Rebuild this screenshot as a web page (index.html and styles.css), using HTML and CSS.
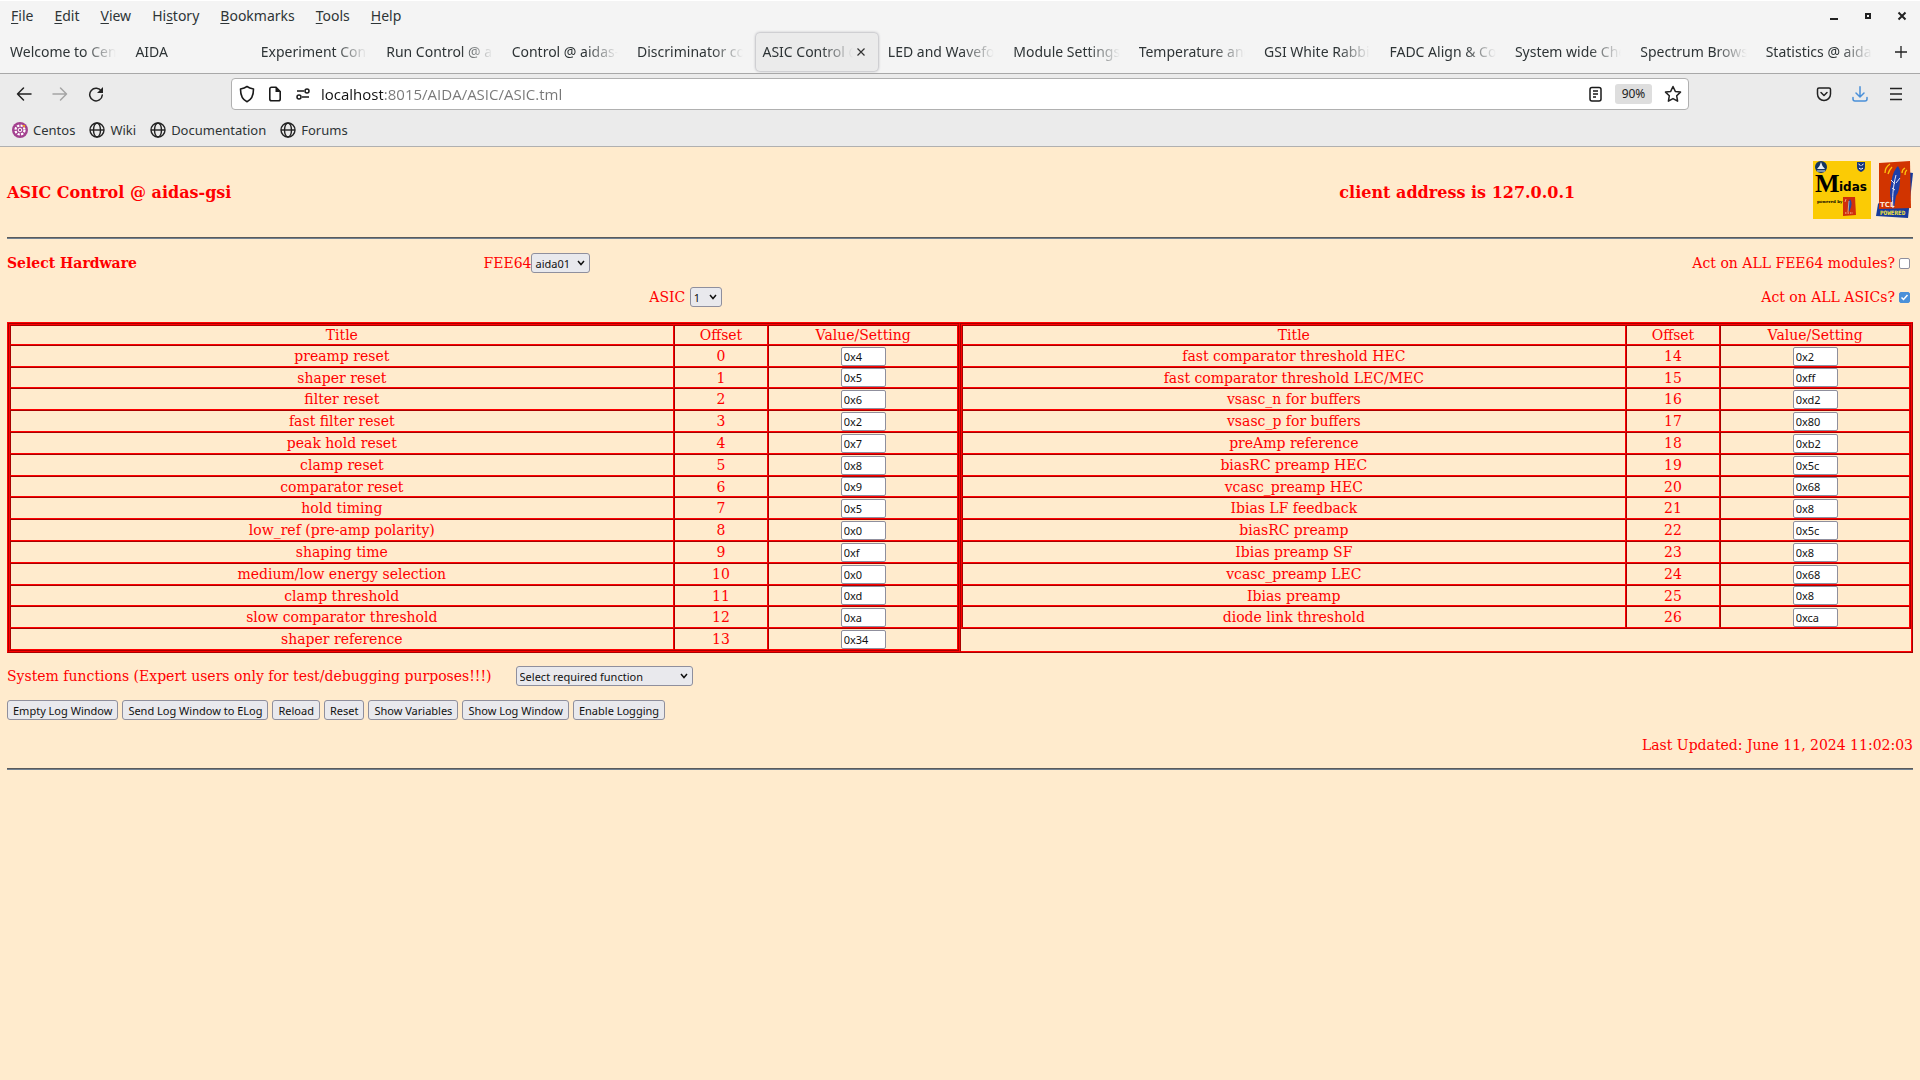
FILE: index.html
```html
<!DOCTYPE html>
<html lang="en">
<head>
<meta charset="utf-8">
<title>ASIC Control @ aidas-gsi</title>
<link rel="stylesheet" href="styles.css">
</head>
<body>
<header class="browser">
  <div class="menubar">
    <nav class="menus">
      <button class="menu"><u>F</u>ile</button>
      <button class="menu"><u>E</u>dit</button>
      <button class="menu"><u>V</u>iew</button>
      <button class="menu">Hi<u>s</u>tory</button>
      <button class="menu"><u>B</u>ookmarks</button>
      <button class="menu"><u>T</u>ools</button>
      <button class="menu"><u>H</u>elp</button>
    </nav>
    <div class="window-buttons">
      <button class="icon-button" aria-label="Minimize"><svg width="16" height="16"><path d="M4 10h8v2H4z" fill="#222"/></svg></button>
      <button class="icon-button" aria-label="Maximize"><svg width="16" height="16"><path d="M6 6h4v4H6z" fill="none" stroke="#222" stroke-width="2"/></svg></button>
      <button class="icon-button" aria-label="Close window"><svg width="16" height="16"><path d="M4.500 4.500l7 7M11.500 4.500l-7 7" stroke="#222" stroke-width="2"/></svg></button>
    </div>
  </div>

  <div class="tabbar">
    <div class="tabs" role="tablist">
      <button class="tab" role="tab"><span class="tab-title">Welcome to Cent</span></button>
      <button class="tab" role="tab"><span class="tab-title">AIDA</span></button>
      <button class="tab" role="tab"><span class="tab-title">Experiment Cont</span></button>
      <button class="tab" role="tab"><span class="tab-title">Run Control @ ai</span></button>
      <button class="tab" role="tab"><span class="tab-title">Control @ aidas-</span></button>
      <button class="tab" role="tab"><span class="tab-title">Discriminator con</span></button>
      <button class="tab active" role="tab" aria-selected="true"><span class="tab-title">ASIC Control @</span><svg class="tab-close" width="16" height="16"><path d="M4.500 4.500l7 7M11.500 4.500l-7 7" stroke="#333" stroke-width="1.200"/></svg></button>
      <button class="tab" role="tab"><span class="tab-title">LED and Wavefo</span></button>
      <button class="tab" role="tab"><span class="tab-title">Module Settings</span></button>
      <button class="tab" role="tab"><span class="tab-title">Temperature and</span></button>
      <button class="tab" role="tab"><span class="tab-title">GSI White Rabbit</span></button>
      <button class="tab" role="tab"><span class="tab-title">FADC Align &amp; Co</span></button>
      <button class="tab" role="tab"><span class="tab-title">System wide Che</span></button>
      <button class="tab" role="tab"><span class="tab-title">Spectrum Brows</span></button>
      <button class="tab" role="tab"><span class="tab-title">Statistics @ aidas</span></button>
    </div>
    <button class="icon-button new-tab" aria-label="New tab"><svg width="16" height="16"><path d="M8 2v12M2 8h12" stroke="#222" stroke-width="1.300"/></svg></button>
  </div>

  <div class="toolbar">
    <div class="nav-buttons">
      <button class="icon-button" aria-label="Back"><svg width="16" height="16" fill="none" stroke="#222" stroke-width="1.500" stroke-linecap="round" stroke-linejoin="round"><path d="M15 8H1.500M7.500 2l-6 6 6 6"/></svg></button>
      <button class="icon-button" aria-label="Forward"><svg width="16" height="16" fill="none" stroke="#a5a5a5" stroke-width="1.500" stroke-linecap="round" stroke-linejoin="round"><path d="M1 8h13.500M8.500 2l6 6-6 6"/></svg></button>
      <button class="icon-button" aria-label="Reload"><svg width="16" height="16"><path d="M13.500 5.500A6.300 6.300 0 1 0 14.300 9" fill="none" stroke="#222" stroke-width="1.500" stroke-linecap="round"/><path d="M15 1v6H9z" fill="#222"/></svg></button>
    </div>
    <div class="urlbar">
      <svg width="16" height="18" fill="none" stroke="#1a1a1a" stroke-width="1.600" stroke-linejoin="round"><path d="M8 1.500c2 1.400 4 2 6.500 2.500 0 6-1.500 10.500-6.500 12.700C3 14.500 1.500 10 1.500 4 4 3.500 6 2.900 8 1.500z"/></svg>
      <svg width="16" height="16"><path d="M2.800 3a1.800 1.800 0 0 1 1.800-1.800H9l4.200 4.300V13a1.800 1.800 0 0 1-1.800 1.800H4.600A1.800 1.800 0 0 1 2.800 13z" fill="none" stroke="#1a1a1a" stroke-width="1.600"/><path d="M8.500 1v5H13.500z" fill="#1a1a1a"/></svg>
      <svg width="16" height="16" fill="none" stroke="#1a1a1a" stroke-width="1.500"><path d="M2 5h7M7 11h7"/><circle cx="12" cy="5" r="2"/><circle cx="4" cy="11" r="2"/></svg>
      <input class="url" aria-label="Address" value="localhost:8015/AIDA/ASIC/ASIC.tml">
      <svg width="16" height="16" fill="none" stroke="#1a1a1a" stroke-width="1.500"><rect x="3" y="1.500" width="11" height="13.500" rx="2"/><path d="M6 5h5M6 8h5M6 11h3"/></svg>
      <button class="zoom-level">90%</button>
      <svg width="18" height="18" fill="none" stroke="#222" stroke-width="1.500" stroke-linejoin="round"><path d="M9 1.500l2.300 4.900 5.200.7-3.800 3.700.9 5.400L9 13.600l-4.600 2.600.9-5.400L1.500 7.100l5.200-.7z"/></svg>
    </div>
    <div class="tool-buttons">
      <button class="icon-button" aria-label="Save to Pocket"><svg width="16" height="16" fill="none" stroke="#222" stroke-width="1.500" stroke-linecap="round" stroke-linejoin="round"><path d="M1.500 3.500a1.500 1.500 0 0 1 1.500-1.500h10a1.500 1.500 0 0 1 1.500 1.500V8a6.500 6.500 0 0 1-13 0zM5 6.500l3 3 3-3"/></svg></button>
      <button class="icon-button" aria-label="Downloads"><svg width="16" height="16" fill="none" stroke="#4a90d9" stroke-width="1.500" stroke-linecap="round" stroke-linejoin="round"><path d="M8 .8v9.700M4 7l4 4 4-4M1 11.500v1.500a2 2 0 0 0 2 2h10a2 2 0 0 0 2-2v-1.500"/></svg></button>
      <button class="icon-button" aria-label="Menu"><svg width="16" height="16"><path d="M2 2.500h12M2 8h12M2 13.500h12" stroke="#222" stroke-width="1.500"/></svg></button>
    </div>
  </div>

  <nav class="bookmarks">
    <a class="bookmark" href="#"><svg width="16" height="16"><circle cx="8" cy="8" r="8" fill="#a3418f"/><circle cx="8" cy="8" r="4.500" fill="none" stroke="#fff" stroke-width="2.200" stroke-dasharray="2.300 1.234"/><circle cx="8" cy="8" r="1.800" fill="none" stroke="#fff" stroke-width="1"/><path d="M10 3h3v3z" fill="#f29b1d"/></svg>Centos</a>
    <a class="bookmark" href="#"><svg width="16" height="16" fill="none" stroke="#222" stroke-width="1.400"><circle cx="8" cy="8" r="7"/><ellipse cx="8" cy="8" rx="3.500" ry="7"/><path d="M1 8h14"/></svg>Wiki</a>
    <a class="bookmark" href="#"><svg width="16" height="16" fill="none" stroke="#222" stroke-width="1.400"><circle cx="8" cy="8" r="7"/><ellipse cx="8" cy="8" rx="3.500" ry="7"/><path d="M1 8h14"/></svg>Documentation</a>
    <a class="bookmark" href="#"><svg width="16" height="16" fill="none" stroke="#222" stroke-width="1.400"><circle cx="8" cy="8" r="7"/><ellipse cx="8" cy="8" rx="3.500" ry="7"/><path d="M1 8h14"/></svg>Forums</a>
  </nav>
</header>

<main class="page">
  <div class="banner">
    <h1 class="heading">ASIC Control @ aidas-gsi</h1>
    <h2 class="heading client">client address is 127.0.0.1</h2>
    <div class="logos">
      <svg width="58" height="58" viewBox="0 0 58 58" role="img" aria-label="Midas">
        <rect width="58" height="58" fill="#fbcb05"/>
        <circle cx="8" cy="6" r="6" fill="#123462"/><path d="M8 1l1.500 4L12 8H4l2.500-3z" fill="#e8eef5"/><path d="M4 10h8" stroke="#e8eef5"/>
        <path d="M44 1h8v5c0 3-2 4-4 5-2-1-4-2-4-5z" fill="#16367d"/><path d="M45.500 3l2 1.500M50.500 3l-2 1.500M46 7c1.500 1.500 2.500 1.500 4 0" stroke="#fff" fill="none"/>
        <text x="2" y="31" class="midas-m">M</text>
        <text x="26" y="30" class="midas-rest">idas</text>
        <text x="4" y="42" class="midas-small">powered by</text>
        <path d="M30 36h12l1 18-13 1z" fill="#cf2e0c"/><path d="M37 38c3 4 1 9-1 13-1-5-2-9 1-13z" fill="#2747a5"/><path d="M36 40l-1 11M33 38l-1 3" stroke="#f3d9a0" stroke-width=".7"/><path d="M32 52h8" stroke="#f6c8a0" stroke-dasharray="1.500 1"/>
      </svg>
      <svg width="37" height="58" viewBox="0 0 37 58" role="img" aria-label="Tcl Powered">
        <path d="M30 11l7 1-5 45-32-2 2-12z" fill="#173b9c"/>
        <path d="M3 2l31-2 1 47-32 1z" fill="#d13400"/>
        <path d="M18 47c-4-8-5-16-3-24 1-8 3-14 7-18 2 3 3 7 2 12 0 8-1 14-4 18z" fill="#1e3fa8"/>
        <path d="M17 47c-1-9 0-22 3-33M16 27l3 2M15 19l4 4M24 17l-4 5" fill="none" stroke="#e8e6f5" stroke-width="1"/>
        <path d="M9 12c0-4 2-7 5-9M12 13c1-3 2-5 4-7M26 12c0-2 1-4 3-5M29 14c0-2 0-4 2-5" fill="none" stroke="#ffc20d" stroke-width="1.300"/>
        <text x="4" y="46" class="tcl">TCL</text>
        <text x="4" y="54" class="tcl-powered">POWERED</text>
      </svg>
    </div>
  </div>
  <hr class="rule">

  <div class="hardware modules">
    <h2 class="subheading">Select Hardware</h2>
    <div class="choice"><label for="fee">FEE64</label><select id="fee" class="select"><option>aida01</option></select></div>
    <div class="check"><label for="all-fee">Act on ALL FEE64 modules?</label><input type="checkbox" id="all-fee" class="tick"></div>
  </div>
  <div class="hardware asics">
    <div class="choice"><label for="asic">ASIC&nbsp;</label><select id="asic" class="select"><option>1</option></select></div>
    <div class="check"><label for="all-asic">Act on ALL ASICs?</label><input type="checkbox" id="all-asic" class="tick" checked></div>
  </div>

  <div class="registers">
    <div class="half"><table class="grid"><thead><tr><th class="title">Title</th><th class="offset">Offset</th><th class="value">Value/Setting</th></tr></thead><tbody id="left"></tbody></table></div>
    <div class="half"><table class="grid"><thead><tr><th class="title">Title</th><th class="offset">Offset</th><th class="value">Value/Setting</th></tr></thead><tbody id="right"></tbody></table></div>
  </div>

  <div class="functions"><label for="fn">System functions (Expert users only for test/debugging purposes!!!)</label><select id="fn" class="select wide"><option>Select required function</option></select></div>

  <div class="actions">
    <button class="action">Empty Log Window</button>
    <button class="action">Send Log Window to ELog</button>
    <button class="action">Reload</button>
    <button class="action">Reset</button>
    <button class="action">Show Variables</button>
    <button class="action">Show Log Window</button>
    <button class="action">Enable Logging</button>
  </div>
  <p class="updated">Last Updated: June 11, 2024 11:02:03</p>
  <hr class="rule">
</main>
<script src="registers.js"></script>
</body>
</html>
```
FILE: styles.css
```css
* { box-sizing: border-box; }
body { margin: 0; background: #ffebcd; color: #f00; font: 14px/18px "DejaVu Serif", serif; }
button, input, select { font-family: "Noto Sans", sans-serif; margin: 0; }
svg { display: block; flex: none; }

.browser { color: #2e3436; font: 13px/18px "Noto Sans", sans-serif; border-bottom: 1px solid #b0b0b0; }
.menubar { display: flex; justify-content: space-between; align-items: center; height: 30px; background: #f4f4f4; border-top: 1px solid #fff; padding: 0 10px; }
.menus { display: flex; gap: 19px; }
.menu { border: 0; background: none; padding: 0 1px; font-size: 14px; line-height: 18px; color: inherit; }
.menu u { text-underline-offset: 2px; }
.window-buttons { display: flex; gap: 18px; }
.icon-button { border: 0; background: none; padding: 0; display: flex; align-items: center; justify-content: center; }

.tabbar { display: flex; align-items: center; height: 44px; background: #f4f4f4; border-bottom: 1px solid #a8a8a8; padding: 0 1px 0 2px; }
.tabs { display: flex; flex: 1; min-width: 0; }
.tab { display: flex; align-items: center; flex: 1 1 0; min-width: 0; height: 38px; margin: 0 2px; padding: 0 9px 0 6px; border: 0; background: none; font-size: 14px; line-height: 20px; color: inherit; text-align: left; }
.tab-title { flex: 1; min-width: 0; overflow: hidden; white-space: nowrap; mask-image: linear-gradient(to left, transparent, #000 32px); }
.tab.active { background: #ebebeb; border-radius: 4px; box-shadow: 0 0 3px #8a8a94; }
.new-tab { width: 36px; }

.toolbar { display: flex; align-items: center; background: #ebebeb; height: 40px; padding: 0 16px; }
.nav-buttons { display: flex; gap: 20px; width: 215px; }
.urlbar { display: flex; align-items: center; flex: 1; height: 32px; background: #fff; border: 1px solid #b0b0b0; border-radius: 4px; padding: 0 6px 0 7px; gap: 12px; }
.url { flex: 1; min-width: 0; border: 0; padding: 0; margin-left: -2px; font-family: "Open Sans", sans-serif; font-size: 15px; line-height: 20px; color: transparent; background: linear-gradient(to right, #111 62px, #777 62px); background-clip: text; }
.zoom-level { border: 0; border-radius: 3px; background: #dedede; color: #222; font-size: 12px; line-height: 20px; padding: 0; width: 37px; }
.tool-buttons { display: flex; justify-content: flex-end; gap: 20px; width: 215px; }

.bookmarks { display: flex; gap: 14px; align-items: center; background: #ebebeb; height: 32px; padding: 0 12px; }
.bookmark { display: flex; align-items: center; gap: 5px; color: inherit; text-decoration: none; }

.page { padding: 14px 7px 0; }
.banner { display: grid; grid-template-columns: 20fr 13fr auto; align-items: center; }
.heading { margin: 0; padding-top: 5px; font-size: 16px; line-height: 20px; }
.client { text-align: center; }
.logos { display: flex; gap: 5px; }
.midas-m { font: bold 26px "Liberation Serif", serif; }
.midas-rest { font: bold 12px "DejaVu Sans", sans-serif; }
.midas-small { font: bold 4px "DejaVu Serif", serif; }
.tcl { font: bold 7px "DejaVu Sans", sans-serif; fill: #fbe5d5; }
.tcl-powered { font: bold 6px "DejaVu Sans Mono", monospace; fill: #f4e53c; }
.rule { margin: 18px 0 0; border: 0; border-top: 1px solid #5a5a5a; border-bottom: 1px solid #708090; }

.hardware { display: grid; align-items: center; height: 20px; }
.modules { grid-template-columns: 25% 1fr auto; margin-top: 14px; }
.asics { grid-template-columns: 1fr auto; padding-left: calc(100% / 3 + 7px); margin-top: 14px; }
.subheading { margin: 0; font-size: 14px; line-height: 18px; }
.choice, .check { display: flex; align-items: center; }
.check { gap: 4px; padding-right: 3px; }
.select { appearance: none; height: 20px; min-width: 32px; border: 1px solid #8f8f9d; border-radius: 3px; color: #111; font-size: 11px; padding: 0 19px 0 3px; background: #e9e9ed url("data:image/svg+xml,%3Csvg xmlns='http://www.w3.org/2000/svg' width='8' height='6'%3E%3Cpath d='M1 1l3 3.500 3-3.500' fill='none' stroke='%23111' stroke-width='1.500'/%3E%3C/svg%3E") no-repeat right 4px center; }
.wide { width: 177px; }
.tick { appearance: none; width: 11px; height: 11px; border: 1px solid #8f8f9d; border-radius: 2px; background: #fff; }
.tick:checked { border-color: #4a90d9; background: #4a90d9 url("data:image/svg+xml,%3Csvg xmlns='http://www.w3.org/2000/svg' width='9' height='9'%3E%3Cpath d='M1.500 4.500l2 2 4-4.500' fill='none' stroke='white' stroke-width='1.500'/%3E%3C/svg%3E") center no-repeat; }

.registers { display: grid; grid-template-columns: 1fr 1fr; margin-top: 15px; border: 1px solid; border-color: #f00 #a80000 #a80000 #f00; }
.half { border: 1px solid; border-color: #a80000 #f00 #f00 #a80000; }
.grid { width: 100%; table-layout: fixed; border-collapse: separate; border-spacing: 0; border: 1px solid; border-color: #f00 #a80000 #a80000 #f00; }
.grid th, .grid td { border: 1px solid; border-color: #a80000 #f00 #f00 #a80000; padding: 0; text-align: center; font-weight: normal; line-height: 18px; }
.grid td { height: 22px; }
.grid tr:nth-child(5n + 2) td { height: 21px; }
.title { width: 70%; }
.offset { width: 10%; }
.value { width: 20%; }
.setting { display: block; width: 45px; height: 19px; margin: 0 auto; border: 1px solid #8f8f9d; border-radius: 2px; background: #fff; color: #111; font-size: 11px; padding: 0 2px; }

.functions { display: flex; align-items: center; gap: 24px; margin-top: 13px; }
.actions { display: flex; gap: 4px; margin-top: 14px; }
.action { height: 20px; border: 1px solid #8f8f9d; border-radius: 3px; background: #e9e9ed; color: #111; font-size: 11px; padding: 0 5px; }
.updated { margin: 16px 0 0; text-align: right; }
.updated + .rule { margin-top: 14px; }
```
FILE: registers.js
```
const registers = [
  ["preamp reset", "0x4"], ["shaper reset", "0x5"], ["filter reset", "0x6"],
  ["fast filter reset", "0x2"], ["peak hold reset", "0x7"], ["clamp reset", "0x8"],
  ["comparator reset", "0x9"], ["hold timing", "0x5"], ["low_ref (pre-amp polarity)", "0x0"],
  ["shaping time", "0xf"], ["medium/low energy selection", "0x0"], ["clamp threshold", "0xd"],
  ["slow comparator threshold", "0xa"], ["shaper reference", "0x34"],
  ["fast comparator threshold HEC", "0x2"], ["fast comparator threshold LEC/MEC", "0xff"],
  ["vsasc_n for buffers", "0xd2"], ["vsasc_p for buffers", "0x80"], ["preAmp reference", "0xb2"],
  ["biasRC preamp HEC", "0x5c"], ["vcasc_preamp HEC", "0x68"], ["Ibias LF feedback", "0x8"],
  ["biasRC preamp", "0x5c"], ["Ibias preamp SF", "0x8"], ["vcasc_preamp LEC", "0x68"],
  ["Ibias preamp", "0x8"], ["diode link threshold", "0xca"]
];
registers.forEach(([name, value], offset) => {
  const body = document.getElementById(offset < 14 ? "left" : "right");
  const row = body.insertRow();
  const label = document.createElement("label");
  label.htmlFor = "reg" + offset;
  label.textContent = name;
  row.insertCell().append(label);
  row.insertCell().textContent = offset;
  const input = document.createElement("input");
  input.id = "reg" + offset;
  input.className = "setting";
  input.value = value;
  row.insertCell().append(input);
});
```
